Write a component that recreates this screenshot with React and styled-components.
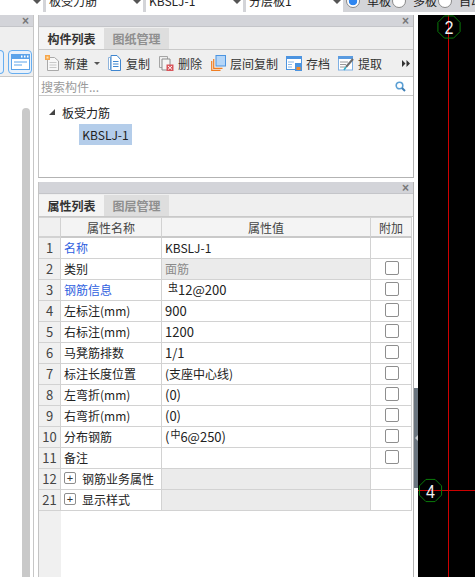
import React from "react";
import styled, {createGlobalStyle} from "styled-components";

const rows = [
    {no: 1, name: "名称", value: "KBSLJ-1", link: true, noCheck: true},
    {no: 2, name: "类别", value: "面筋", muted: true},
    {no: 3, name: "钢筋信息", value: "12@200", grade: "虫", link: true, num: true},
    {no: 4, name: "左标注(mm)", value: "900", num: true},
    {no: 5, name: "右标注(mm)", value: "1200", num: true},
    {no: 6, name: "马凳筋排数", value: "1/1", num: true},
    {no: 7, name: "标注长度位置", value: "(支座中心线)"},
    {no: 8, name: "左弯折(mm)", value: "(0)", num: true},
    {no: 9, name: "右弯折(mm)", value: "(0)", num: true},
    {no: 10, name: "分布钢筋", value: "6@250)", grade: "中", open: "(", num: true},
    {no: 11, name: "备注", value: ""},
    {no: 12, name: "钢筋业务属性", group: true},
    {no: 21, name: "显示样式", group: true},
];

function NewIcon() {
    return (
        <svg width="15" height="16" viewBox="0 0 15 16">
            <path d="M2.5 2.5h7l4 3.5v9.5h-11z" fill="#f7f7f7" stroke="#a9a9a9"/>
            <path d="M4.5 7.5h7M4.5 10h7M4.5 12.5h7" stroke="#c8c8c8"/>
            <rect x="0" y="0" width="5" height="5" fill="#f6a54a"/>
            <rect x="1.5" y="1.5" width="2" height="2" fill="#fde3b0"/>
        </svg>
    );
}

function CopyIcon() {
    return (
        <svg width="14" height="16" viewBox="0 0 14 16">
            <path d="M.5 2.5h2v12h-2z" fill="#fff" stroke="#8fb4dc"/>
            <path d="M3 .5h6l3.5 4v11H3z" fill="#fff" stroke="#3f86cf"/>
            <path d="M5 6.5h5.5M5 9h5.5M5 11.5h5.5" stroke="#3f86cf"/>
        </svg>
    );
}

function DeleteIcon() {
    return (
        <svg width="15" height="15" viewBox="0 0 15 15">
            <path d="M.5.5h8v11h-8z" fill="none" stroke="#a5a5a5"/>
            <path d="M3 3h8v11H3z" fill="#f4f4f4" stroke="#8c8c8c"/>
            <rect x="7.5" y="8.5" width="7" height="6.5" fill="#d9545a"/>
            <path d="M9 10l4 3.5M13 10l-4 3.5" stroke="#fff"/>
        </svg>
    );
}

function FloorCopyIcon() {
    return (
        <svg width="15" height="16" viewBox="0 0 15 16">
            <path d="M.7 6v9.3h8.8" fill="none" stroke="#ef7d22" strokeWidth="1.2"/>
            <path d="M2.7 4v9.3h8.8" fill="none" stroke="#ef7d22" strokeWidth="1.2"/>
            <rect x="5" y=".5" width="9.5" height="10.5" fill="#b5d6f8" stroke="#4c94e0"/>
        </svg>
    );
}

function SaveIcon() {
    return (
        <svg width="16" height="15" viewBox="0 0 16 15">
            <rect x=".5" y=".5" width="15" height="13" fill="#fff" stroke="#4c94e0"/>
            <rect x="0" y="0" width="16" height="3" fill="#4c94e0"/>
            <path d="M2 6h6M2 8.5h4M2 11h4" stroke="#8db8e6"/>
            <rect x="9" y="7" width="7" height="8" fill="#4c94e0"/>
            <rect x="10.5" y="11" width="4" height="3" fill="#f08a2c"/>
        </svg>
    );
}

function PickIcon() {
    return (
        <svg width="16" height="15" viewBox="0 0 16 15">
            <rect x=".5" y=".5" width="14" height="13.5" fill="#fff" stroke="#7fb0e4"/>
            <rect x="0" y="0" width="15" height="3" fill="#5a9be0"/>
            <path d="M2 6h8M2 8.5h6M2 11h5" stroke="#9a9a9a"/>
            <path d="M15 3L8 11" stroke="#6c6c6c" strokeWidth="2"/>
            <path d="M8 11l-2 3" stroke="#35b0c8" strokeWidth="1.6"/>
        </svg>
    );
}

function SearchIcon() {
    return (
        <svg width="11" height="11" viewBox="0 0 11 11">
            <circle cx="4.5" cy="4.5" r="3.3" fill="none" stroke="#5a9fd4" strokeWidth="1.6"/>
            <path d="M7 7l3 3" stroke="#3f7fb5" strokeWidth="2"/>
        </svg>
    );
}

function WindowIcon() {
    return (
        <svg width="19" height="16" viewBox="0 0 19 16">
            <rect x="0" y="0" width="19" height="16" fill="#5ba3ea"/>
            <rect x="1" y="5" width="17" height="10" fill="#fff"/>
            <path d="M10 2.5h1.5M13 2.5h1.5M16 2.5h1.5" stroke="#fff" strokeWidth="2"/>
            <path d="M3 8h13M3 11h8" stroke="#5ba3ea"/>
        </svg>
    );
}

function Octagon({cx, cy, label}) {
    const points = Array.from({length: 8}, (_, i) => {
        const a = (Math.PI / 4) * i + Math.PI / 8;
        return `${cx + 12 * Math.cos(a)},${cy + 12 * Math.sin(a)}`;
    }).join(" ");
    return (
        <>
            <polygon points={points} fill="none" stroke="#0a7a0a"/>
            <AxisLabel x={cx} y={cy + 7} textLength="9" lengthAdjust="spacingAndGlyphs">{label}</AxisLabel>
        </>
    );
}

function Select({children, width}) {
    return (
        <SelectBox $width={width}>
            <SelectText>{children}</SelectText>
            <Caret/>
        </SelectBox>
    );
}

function ToolButton({icon, label, gap, caret}) {
    return (
        <ToolItem $gap={gap}>
            {icon}
            <span>{label}</span>
            {caret && <SmallCaret/>}
        </ToolItem>
    );
}

function TitleBar() {
    return <Title><CloseMark>×</CloseMark></Title>;
}

export default function App() {
    return (
        <Page>
            <GlobalStyle/>
            <TopBar>
                <Select width={43}/>
                <Select width={97}>板受力筋</Select>
                <Select width={97}>KBSLJ-1</Select>
                <Select width={97}>分层板1</Select>
                <RadioGroup>
                    <RadioItem><Radio $on/>单板</RadioItem>
                    <RadioItem><Radio/>多板</RadioItem>
                    <RadioItem><Radio/>自动</RadioItem>
                </RadioGroup>
            </TopBar>
            <Main>
                <LeftPanel>
                    <TitleBar/>
                    <LeftTools>
                        <WindowButton $cut/>
                        <WindowButton><WindowIcon/></WindowButton>
                    </LeftTools>
                    <LeftBody><ScrollThumb/></LeftBody>
                </LeftPanel>
                <Center>
                    <ListPanel>
                        <TitleBar/>
                        <Tabs>
                            <Tab $active>构件列表</Tab>
                            <Tab>图纸管理</Tab>
                        </Tabs>
                        <Toolbar>
                            <ToolButton icon={<NewIcon/>} label="新建" caret gap={8}/>
                            <ToolButton icon={<CopyIcon/>} label="复制" gap={9}/>
                            <ToolButton icon={<DeleteIcon/>} label="删除" gap={9}/>
                            <ToolButton icon={<FloorCopyIcon/>} label="层间复制" gap={8}/>
                            <ToolButton icon={<SaveIcon/>} label="存档" gap={8}/>
                            <ToolButton icon={<PickIcon/>} label="提取"/>
                            <More>
                                <svg width="8" height="7" viewBox="0 0 8 7">
                                    <path d="M0 0l3.5 3.5L0 7zM4.5 0L8 3.5 4.5 7z" fill="#333"/>
                                </svg>
                            </More>
                        </Toolbar>
                        <SearchRow>
                            <SearchPlaceholder>搜索构件...</SearchPlaceholder>
                            <SearchIcon/>
                        </SearchRow>
                        <Tree>
                            <TreeRoot>
                                <TreeArrow/>
                                板受力筋
                            </TreeRoot>
                            <TreeLeaf>KBSLJ-1</TreeLeaf>
                        </Tree>
                    </ListPanel>
                    <PropertyPanel>
                        <TitleBar/>
                        <Tabs>
                            <Tab $active>属性列表</Tab>
                            <Tab>图层管理</Tab>
                        </Tabs>
                        <TableWrap>
                            <Grid>
                                <NumCell $head/>
                                <HeadCell>属性名称</HeadCell>
                                <HeadCell>属性值</HeadCell>
                                <HeadCell>附加</HeadCell>
                                {rows.map((row) => (
                                    <React.Fragment key={row.no}>
                                        <NumCell>{row.no}</NumCell>
                                        <NameCell $link={row.link}>
                                            {row.group && <Expand>+</Expand>}
                                            {row.name}
                                        </NameCell>
                                        <ValueCell $muted={row.muted || row.group} $num={row.num}>
                                            {row.open}
                                            {row.grade && <Grade $first={!row.open}>{row.grade}</Grade>}
                                            {row.value}
                                        </ValueCell>
                                        <CheckCell>
                                            {!row.noCheck && !row.group && <CheckBox/>}
                                        </CheckCell>
                                    </React.Fragment>
                                ))}
                            </Grid>
                            <GutterFill/>
                        </TableWrap>
                    </PropertyPanel>
                </Center>
                <Splitter>
                    <SplitHandle><SplitArrow/></SplitHandle>
                </Splitter>
                <Canvas>
                    <svg width="57" height="562" viewBox="418 15 57 562">
                        <path d="M448.5 15V577" stroke="#cc0000" strokeWidth="1"/>
                        <path d="M418 490.5H475" stroke="#cc0000" strokeWidth="1"/>
                        <Octagon cx={449} cy={27} label="2"/>
                        <Octagon cx={430.5} cy={490.5} label="4"/>
                    </svg>
                </Canvas>
            </Main>
        </Page>
    );
}

const GlobalStyle = createGlobalStyle`
    html, body {
        margin: 0;
        padding: 0;
        background: #fff;
    }

    * {
        box-sizing: border-box;
    }
`;

const Page = styled.div`
    width: 475px;
    height: 577px;
    display: flex;
    flex-direction: column;
    overflow: hidden;
    font-family: "Noto Sans CJK SC", "Noto Sans", sans-serif;
    font-size: 12px;
    color: #222;
    background: #fff;
`;

const TopBar = styled.div`
    height: 15px;
    flex: none;
    display: flex;
    align-items: flex-end;
    gap: 3px;
    background: #d3d4d8;
    border-bottom: 3px solid;
    border-image: linear-gradient(#a9abaf 66%, #fff 66%) 1;
    overflow: hidden;
`;

const SelectBox = styled.div`
    width: ${(p) => p.$width}px;
    height: 22px;
    flex: none;
    display: flex;
    align-items: flex-end;
    justify-content: space-between;
    padding: 0 2px 0 3px;
    background: #fff;
    font-size: 12px;
    line-height: 16px;
`;

const SelectText = styled.span`
    margin-bottom: 3px;
`;

const Caret = styled.i`
    width: 0;
    height: 0;
    margin-bottom: 8px;
    border: 4px solid transparent;
    border-top: 4px solid #555;
    border-bottom: 0;
`;

const RadioGroup = styled.div`
    display: flex;
    margin-bottom: 4px;
`;

const RadioItem = styled.div`
    width: 46px;
    display: flex;
    align-items: flex-end;
    gap: 7px;
    font-size: 12px;
    line-height: 14px;
    white-space: nowrap;
`;

const Radio = styled.span`
    width: 14px;
    height: 14px;
    flex: none;
    border-radius: 50%;
    border: 1px solid #8a8a8a;
    background: ${(p) => (p.$on ? "radial-gradient(circle, #2f86f0 0 4px, #fff 4.6px)" : "#fff")};
`;

const Main = styled.div`
    flex: 1;
    min-height: 0;
    display: flex;
`;

const LeftPanel = styled.div`
    width: 34px;
    flex: none;
    display: flex;
    flex-direction: column;
    border-right: 1px solid #c6c6c6;
`;

const Title = styled.div`
    height: 12px;
    flex: none;
    display: flex;
    align-items: center;
    justify-content: flex-end;
    padding-right: 4px;
    background: #d3d4d9;
    border-bottom: 1px solid #c4c5c9;
`;

const CloseMark = styled.span`
    font-family: "Liberation Sans", sans-serif;
    font-size: 12px;
    font-weight: 700;
    line-height: 10px;
    color: #777;
`;

const LeftTools = styled.div`
    height: 50px;
    flex: none;
    display: flex;
    align-items: flex-end;
    justify-content: flex-end;
    gap: 4px;
    padding: 0 1px 2px 0;
    background: #efefef;
    border-bottom: 1px solid #c9c9c9;
`;

const WindowButton = styled.div`
    width: ${(p) => (p.$cut ? "4px" : "24px")};
    height: 24px;
    display: flex;
    align-items: center;
    justify-content: center;
    border: 1px solid #67aef0;
    border-left: ${(p) => (p.$cut ? "0" : "1px solid #67aef0")};
    border-radius: ${(p) => (p.$cut ? "0 4px 4px 0" : "4px")};
    background: #e8f1fb;
`;

const LeftBody = styled.div`
    flex: 1;
    display: flex;
    justify-content: flex-end;
    padding: 31px 3px 0 0;
`;

const ScrollThumb = styled.div`
    width: 8px;
    height: 100%;
    border-radius: 4px 4px 0 0;
    background: #c9c9c9;
`;

const Center = styled.div`
    width: 376px;
    flex: none;
    margin-left: 4px;
    display: flex;
    flex-direction: column;
    gap: 4px;
`;

const ListPanel = styled.div`
    height: 163px;
    flex: none;
    display: flex;
    flex-direction: column;
    border: 1px solid #b3b3b3;
    border-top: 0;
    border-left-color: #c4c4c4;
`;

const PropertyPanel = styled.div`
    flex: 1;
    min-height: 0;
    display: flex;
    flex-direction: column;
    border-right: 1px solid #b3b3b3;
    border-left: 1px solid #c4c4c4;
`;

const Tabs = styled.div`
    height: 23px;
    flex: none;
    display: flex;
    align-items: stretch;
    background: #efefef;
    border-bottom: 1px solid #c9c9c9;
`;

const Tab = styled.div`
    width: 65px;
    display: flex;
    align-items: center;
    justify-content: center;
    font-size: 12px;
    font-weight: 700;
    color: ${(p) => (p.$active ? "#333" : "#8f8f8f")};
    background: ${(p) => (p.$active ? "#f4f4f4" : "#dedede")};
    margin-top: 1px;
`;

const Toolbar = styled.div`
    height: 27px;
    flex: none;
    display: flex;
    align-items: center;
    padding-left: 6px;
    background: #efefef;
    border-bottom: 1px solid #c9c9c9;
`;

const ToolItem = styled.div`
    display: flex;
    align-items: center;
    gap: 4px;
    margin-right: ${(p) => p.$gap || 0}px;
    color: #333;
    white-space: nowrap;
`;

const SmallCaret = styled.i`
    width: 0;
    height: 0;
    margin-left: 2px;
    border: 3px solid transparent;
    border-top: 3px solid #555;
    border-bottom: 0;
`;

const More = styled.div`
    margin-left: auto;
    margin-right: 3px;
    display: flex;
`;

const SearchRow = styled.div`
    height: 19px;
    flex: none;
    display: flex;
    align-items: center;
    justify-content: space-between;
    padding: 0 7px 0 2px;
    background: #fff;
    border-bottom: 1px solid #c9c9c9;
`;

const SearchPlaceholder = styled.span`
    color: #9a9a9a;
`;

const Tree = styled.div`
    flex: 1;
    padding: 4px 0 0 10px;
    background: #fff;
`;

const TreeRoot = styled.div`
    height: 24px;
    display: flex;
    align-items: center;
    gap: 7px;
`;

const TreeArrow = styled.i`
    width: 0;
    height: 0;
    border-left: 6px solid transparent;
    border-bottom: 6px solid #444;
`;

const TreeLeaf = styled.div`
    width: 53px;
    height: 21px;
    margin-left: 30px;
    display: flex;
    align-items: center;
    justify-content: center;
    background: #b4cdea;
`;

const TableWrap = styled.div`
    flex: 1;
    min-height: 0;
    display: flex;
    flex-direction: column;
`;

const Grid = styled.div`
    width: 373px;
    display: grid;
    grid-template-columns: 22px 101px 209px 41px;
    grid-auto-rows: 21px;
    flex: none;
`;

const Cell = styled.div`
    display: flex;
    align-items: center;
    padding-bottom: 2px;
    border-right: 1px solid #d2d2d2;
    border-bottom: 1px solid #d2d2d2;
    white-space: nowrap;
    overflow: hidden;
`;

const NumCell = styled(Cell)`
    justify-content: center;
    background: #f0f0f0;
    color: #444;
    font-size: 13px;
    border-top: ${(p) => (p.$head ? "1px solid #d2d2d2" : "0")};
    border-bottom-width: ${(p) => (p.$head ? "2px" : "1px")};
`;

const HeadCell = styled(Cell)`
    justify-content: center;
    padding-bottom: 0;
    background: #f4f4f4;
    color: #444;
    border-top: 1px solid #d2d2d2;
    border-bottom-width: 2px;
    border-bottom-color: #c9c9c9;
`;

const NameCell = styled(Cell)`
    padding-left: 3px;
    color: ${(p) => (p.$link ? "#2f5fe0" : "#222")};
`;

const ValueCell = styled(Cell)`
    padding-left: 3px;
    font-size: ${(p) => (p.$num ? "13px" : "12px")};
    color: ${(p) => (p.$muted ? "#8a8a8a" : "#222")};
    background: ${(p) => (p.$muted ? "#ebebeb" : "#fff")};
`;

const CheckCell = styled(Cell)`
    justify-content: center;
`;

const CheckBox = styled.span`
    width: 14px;
    height: 14px;
    margin-left: 1px;
    border: 1px solid #8e8e8e;
    border-radius: 2px;
    background: #fff;
`;

const Expand = styled.span`
    width: 12px;
    height: 12px;
    margin-right: 6px;
    display: flex;
    align-items: center;
    justify-content: center;
    border: 1px solid #8e8e8e;
    border-radius: 2px;
    font-family: "Liberation Sans", sans-serif;
    font-size: 11px;
    line-height: 1;
    color: #333;
`;

const Grade = styled.span`
    font-size: 10px;
    line-height: 1;
    margin: -4px 0 0 ${(p) => (p.$first ? "3px" : "1px")};
`;

const GutterFill = styled.div`
    width: 22px;
    flex: 1;
    background: #f0f0f0;
`;

const Splitter = styled.div`
    width: 4px;
    flex: none;
    padding-top: 373px;
    background: #fff;
`;

const SplitHandle = styled.div`
    height: 100px;
    display: flex;
    align-items: center;
    justify-content: flex-end;
    background: #6b7680;
`;

const SplitArrow = styled.i`
    width: 0;
    height: 0;
    border: 3px solid transparent;
    border-right: 3px solid #c8ccd0;
    border-left: 0;
`;

const Canvas = styled.div`
    flex: 1;
    background: #000;
    display: flex;
    overflow: hidden;
`;

const AxisLabel = styled.text`
    font-family: "Liberation Sans", sans-serif;
    font-size: 19px;
    fill: #f0f0f0;
    text-anchor: middle;
`;
